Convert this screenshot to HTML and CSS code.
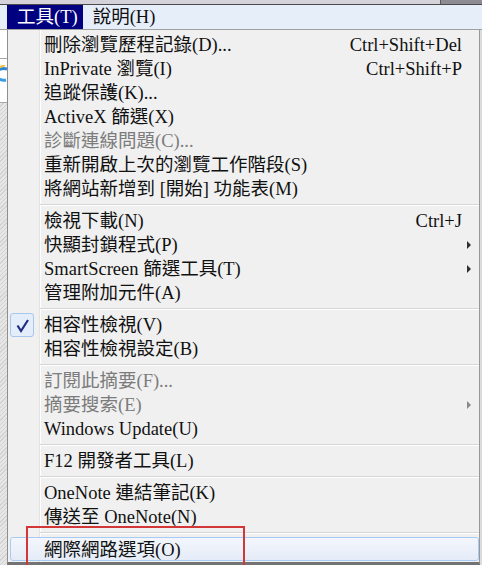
FILE: index.html
```html
<!DOCTYPE html>
<html>
<head>
<title>工具選單</title>
<link rel="stylesheet" href="styles.css">
</head>
<body>

<div class="chrome">
  <div class="chrome-fill"></div>
  <div class="chrome-dark"></div>
</div>

<div class="menubar">
  <div class="top-item open">工具(T)</div>
  <div class="top-item">說明(H)</div>
</div>

<div class="stage">
  <div class="backdrop">
    <div class="pane"></div>
    <div class="pane tall">
      <svg class="ie-logo" width="7" height="18" viewBox="0 0 7 18">
        <path d="M-4 9 A8 7 0 0 1 7 4" fill="none" stroke="#2f86d6" stroke-width="3"/>
        <path d="M-4 10 A8 7 0 0 0 6 15" fill="none" stroke="#3a9be6" stroke-width="3"/>
        <path d="M0 2 L5 0" stroke="#f0c030" stroke-width="2"/>
      </svg>
    </div>
    <div class="hatch"></div>
  </div>

  <div class="menu">
    <div class="item"><span></span><span>刪除瀏覽歷程記錄(D)...</span><span class="key">Ctrl+Shift+Del</span><span></span></div>
    <div class="item"><span></span><span>InPrivate 瀏覽(I)</span><span class="key">Ctrl+Shift+P</span><span></span></div>
    <div class="item"><span></span><span>追蹤保護(K)...</span><span></span><span></span></div>
    <div class="item"><span></span><span>ActiveX 篩選(X)</span><span></span><span></span></div>
    <div class="item disabled"><span></span><span>診斷連線問題(C)...</span><span></span><span></span></div>
    <div class="item"><span></span><span>重新開啟上次的瀏覽工作階段(S)</span><span></span><span></span></div>
    <div class="item"><span></span><span>將網站新增到 [開始] 功能表(M)</span><span></span><span></span></div>
    <div class="sep"></div>
    <div class="item"><span></span><span>檢視下載(N)</span><span class="key">Ctrl+J</span><span></span></div>
    <div class="item"><span></span><span>快顯封鎖程式(P)</span><span></span><span class="arrow"></span></div>
    <div class="item"><span></span><span>SmartScreen 篩選工具(T)</span><span></span><span class="arrow"></span></div>
    <div class="item"><span></span><span>管理附加元件(A)</span><span></span><span></span></div>
    <div class="sep"></div>
    <div class="item">
      <span class="check">
        <svg width="22" height="22" viewBox="0 0 22 22">
          <path d="M6.5 11.5 L10 17 L17 6" fill="none" stroke="#1f2d84" stroke-width="2.2"/>
        </svg>
      </span>
      <span>相容性檢視(V)</span><span></span><span></span>
    </div>
    <div class="item"><span></span><span>相容性檢視設定(B)</span><span></span><span></span></div>
    <div class="sep"></div>
    <div class="item disabled"><span></span><span>訂閱此摘要(F)...</span><span></span><span></span></div>
    <div class="item disabled"><span></span><span>摘要搜索(E)</span><span></span><span class="arrow"></span></div>
    <div class="item"><span></span><span>Windows Update(U)</span><span></span><span></span></div>
    <div class="sep"></div>
    <div class="item"><span></span><span>F12 開發者工具(L)</span><span></span><span></span></div>
    <div class="sep"></div>
    <div class="item"><span></span><span>OneNote 連結筆記(K)</span><span></span><span></span></div>
    <div class="item"><span></span><span>傳送至 OneNote(N)</span><span></span><span></span></div>
    <div class="sep"></div>
    <div class="item hover"><span></span><span>網際網路選項(O)</span><span></span><span></span></div>

    <!-- red annotation box -->
    <div class="callout"></div>
  </div>

  <div class="edge"></div>
</div>

</body>
</html>
```

FILE: styles.css
```css
/* Reset */
* {
  margin: 0;
  padding: 0;
  box-sizing: border-box;
}

body {
  width: 482px;
  height: 565px;
  overflow: hidden;
  font-family: "Liberation Serif", "Noto Sans CJK TC", serif;
  font-size: 18.5px;
  color: #111;
  background-color: #f0f0f0;
}

/* Window chrome strip at the very top */
.chrome {
  display: flex;
  height: 5px;
  border-bottom: 1px solid #4a4a4a;
}

.chrome-fill {
  flex: 1;
  background-color: #d6d2da;
}

.chrome-dark {
  width: 42px;
  background-color: #8e8c92;
  border-left: 1px solid #5a5a5a;
}

/* Menu bar */
.menubar {
  display: flex;
  height: 25px;
  padding-left: 7px;
  background-color: #e6eef9;
  border-bottom: 1px solid #a0a0a0;
}

.top-item {
  padding: 0 5px 0 10px;
  line-height: 24px;
  color: #111;
}

.top-item.open {
  background-color: #000080;
  color: #fff;
}

/* Area under the menu bar */
.stage {
  display: flex;
  height: 535px;
}

.backdrop {
  width: 7px;
  display: flex;
  flex-direction: column;
}

.pane {
  height: 29px;
  background-color: #fff;
  border-bottom: 1px solid #a7a7a7;
}

.pane.tall {
  height: 44px;
  padding-top: 6px;
}

.ie-logo {
  display: block;
}

.hatch {
  flex: 1;
  background: repeating-linear-gradient(135deg, #e6e6e6 0 2px, #d2d2d2 2px 3px);
}

/* Drop-down menu */
.menu {
  position: relative;
  width: 473px;
  padding-top: 3px;
  border-left: 1px solid #8e8e8e;
  border-right: 1px solid #979797;
  border-bottom: 3px solid #737373;
  background: linear-gradient(to right,
    #f0f0f0 31px, #e2e3e3 31px, #e2e3e3 32px,
    #fff 32px, #fff 33px, #f0f0f0 33px);
}

.item {
  display: grid;
  grid-template-columns: 36px 1fr auto 17px;
  align-items: center;
  height: 24px;
  line-height: 24px;
  white-space: nowrap;
}

.item.disabled {
  color: #7c7c7c;
}

.key {
  text-align: right;
}

.arrow {
  width: 0;
  height: 0;
  margin-left: 5px;
  border-left: 4px solid #303030;
  border-top: 4px solid transparent;
  border-bottom: 4px solid transparent;
}

.disabled .arrow {
  border-left-color: #8a8a8a;
}

.check {
  display: flex;
  align-items: center;
  justify-content: center;
  width: 24px;
  height: 24px;
  margin-left: 2px;
  border: 1px solid #a9c6ec;
  border-radius: 3px;
  background-color: #e4edfa;
}

.sep {
  height: 8px;
  margin-left: 32px;
  padding-top: 3px;
}

.sep::before {
  content: "";
  display: block;
  height: 1px;
  background-color: #d7d7d7;
  border-bottom: 1px solid #fff;
  box-sizing: content-box;
}

.item.hover {
  grid-template-columns: 33px 1fr auto 17px;
  margin-left: 2px;
  border: 1px solid #a8cbf3;
  border-radius: 3px;
  background: linear-gradient(#f3f6fc, #e5ecf8);
}

/* Annotation rectangle drawn over the screenshot */
.callout {
  position: absolute;
  left: 18px;
  top: 496px;
  width: 219px;
  height: 50px;
  border: 2px solid #d23636;
}

.edge {
  flex: 1;
  background-color: #dcdcdc;
}
```
